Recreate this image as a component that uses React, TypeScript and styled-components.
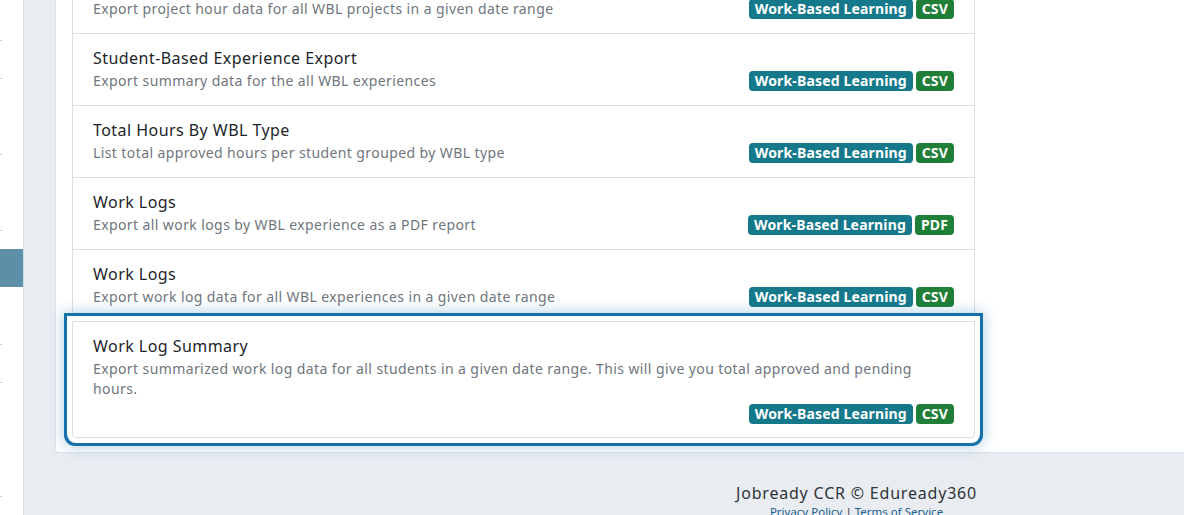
import React from "react"
import styled, { createGlobalStyle } from "styled-components"

const GlobalStyle = createGlobalStyle`
  html, body {
    margin: 0;
    padding: 0;
    background: #e9edf2;
    font-family: "Noto Sans", "Liberation Sans", sans-serif;
    overflow: hidden;
  }
`

const Page = styled.div`
  display: flex;
  width: 1184px;
  height: 515px;
  overflow: hidden;
`

const Sidebar = styled.nav`
  flex: 0 0 23px;
  background: #fff;
  border-right: 1px solid #d3dbe3;
  display: flex;
  flex-direction: column;
  padding-top: 21px;
`

const NavItem = styled.div<{ $active?: boolean; $tick?: boolean }>`
  height: 38px;
  flex: 0 0 38px;
  position: relative;
  background: ${p => (p.$active ? "#5e8fa8" : "transparent")};

  &::before {
    content: "";
    display: ${p => (p.$tick ? "block" : "none")};
    position: absolute;
    left: 0;
    top: 19px;
    width: 2px;
    height: 1px;
    background: #c9cdd2;
  }
`

const Main = styled.main`
  flex: 1;
  display: flex;
  flex-direction: column;
  margin-top: -38px;
  min-width: 0;
`

const Panel = styled.section`
  margin-left: 31px;
  background: #fff;
  border: 1px solid #dde3ea;
  border-top: none;
  border-right: none;
  border-radius: 0 0 0 4px;
  padding: 0 0 14px 16px;
`

const List = styled.ul`
  list-style: none;
  margin: 0;
  padding: 0;
  width: 903px;
`

const Row = styled.li<{ $active?: boolean }>`
  position: relative;
  padding: 12px 20px 13px;
  border: 1px solid #dedede;
  margin-top: -1px;
  background: #fff;
  z-index: ${p => (p.$active ? 1 : 0)};

  &:last-child {
    border-radius: 0 0 4px 4px;
  }

  box-shadow: ${p =>
    p.$active
      ? "0 0 0 5px #fff, 0 0 0 8px #1671ab, 0 0 14px 9px rgba(22, 113, 171, 0.32)"
      : "none"};
`

const Title = styled.div`
  font-size: 16px;
  line-height: 24px;
  color: #212529;
  letter-spacing: 0.45px;
`

const Body = styled.div`
  display: flex;
  flex-wrap: wrap;
  align-items: center;
  row-gap: 4px;
`

const Desc = styled.div`
  flex: 0 1 auto;
  font-size: 14px;
  line-height: 20px;
  color: #6f767d;
  letter-spacing: 0.4px;
  padding: 1px 0;
`

const Badges = styled.div`
  margin-left: auto;
  display: flex;
  gap: 3px;
`

const Badge = styled.span<{ $tone: "teal" | "green" }>`
  display: inline-block;
  padding: 0 6px;
  height: 20px;
  line-height: 20px;
  border-radius: 4px;
  font-family: "Noto Sans", "Liberation Sans", sans-serif;
  font-size: 14px;
  font-weight: 700;
  color: #fff;
  letter-spacing: 0.15px;
  background: ${p => (p.$tone === "teal" ? "#15798b" : "#1f7e37")};
`

const Footer = styled.footer`
  margin-top: 28px;
  padding-left: 505px;
  text-align: center;
`

const Brand = styled.div`
  font-size: 16px;
  line-height: 24px;
  color: #2f3438;
  letter-spacing: 0.8px;
`

const Links = styled.div`
  font-size: 11.5px;
  line-height: 14px;
  color: #333;

  a {
    color: #1d5e8c;
    text-decoration: none;
  }
`

type Report = { title: string; desc: string; format: string; active?: boolean }

const reports: Report[] = [
  { title: "Project Hours", desc: "Export project hour data for all WBL projects in a given date range", format: "CSV" },
  { title: "Student-Based Experience Export", desc: "Export summary data for the all WBL experiences", format: "CSV" },
  { title: "Total Hours By WBL Type", desc: "List total approved hours per student grouped by WBL type", format: "CSV" },
  { title: "Work Logs", desc: "Export all work logs by WBL experience as a PDF report", format: "PDF" },
  { title: "Work Logs", desc: "Export work log data for all WBL experiences in a given date range", format: "CSV" },
  {
    title: "Work Log Summary",
    desc: "Export summarized work log data for all students in a given date range. This will give you total approved and pending hours.",
    format: "CSV",
    active: true,
  },
]

const navItems = [
  { tick: true }, { tick: true }, { tick: false }, { tick: true }, { tick: false },
  { tick: true }, { active: true }, { tick: false }, { tick: true }, { tick: true },
  { tick: false }, { tick: false }, { tick: true }, { tick: false },
]

const App = () => (
  <>
    <GlobalStyle />
    <Page>
      <Sidebar>
        {navItems.map((n, i) => (
          <NavItem key={i} $active={n.active} $tick={n.tick} />
        ))}
      </Sidebar>
      <Main>
        <Panel>
          <List>
            {reports.map((r, i) => (
              <Row key={i} $active={r.active}>
                <Title>{r.title}</Title>
                <Body>
                  <Desc>{r.desc}</Desc>
                  <Badges>
                    <Badge $tone="teal">Work-Based Learning</Badge>
                    <Badge $tone="green">{r.format}</Badge>
                  </Badges>
                </Body>
              </Row>
            ))}
          </List>
        </Panel>
        <Footer>
          <Brand>Jobready CCR © Eduready360</Brand>
          <Links>
            <a href="#">Privacy Policy</a> | <a href="#">Terms of Service</a>
          </Links>
        </Footer>
      </Main>
    </Page>
  </>
)

export default App
